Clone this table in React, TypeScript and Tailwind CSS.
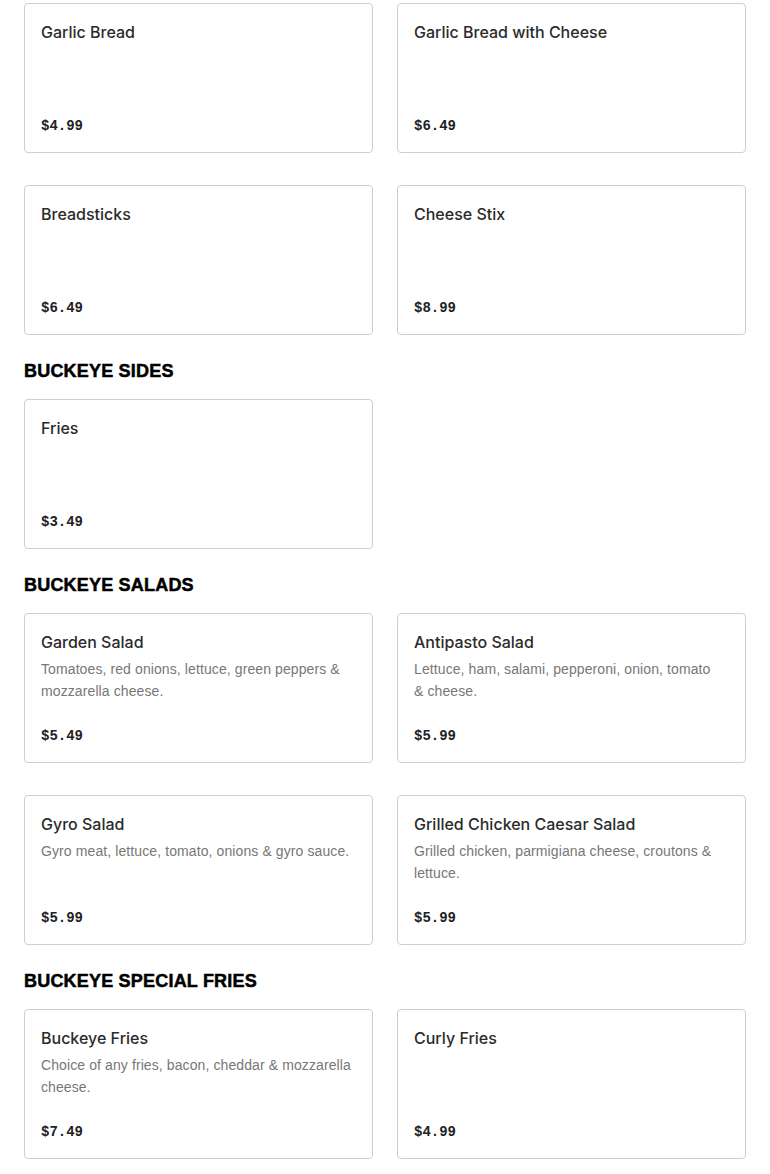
type Item = {
  name: string;
  desc?: string;
  price: string;
};

type Section = {
  title?: string;
  items: Item[];
};

const sections: Section[] = [
  {
    items: [
      { name: "Garlic Bread", price: "$4.99" },
      { name: "Garlic Bread with Cheese", price: "$6.49" },
      { name: "Breadsticks", price: "$6.49" },
      { name: "Cheese Stix", price: "$8.99" },
    ],
  },
  {
    title: "BUCKEYE SIDES",
    items: [{ name: "Fries", price: "$3.49" }],
  },
  {
    title: "BUCKEYE SALADS",
    items: [
      {
        name: "Garden Salad",
        desc: "Tomatoes, red onions, lettuce, green peppers & mozzarella cheese.",
        price: "$5.49",
      },
      {
        name: "Antipasto Salad",
        // keep "& cheese." together so it wraps like the live menu
        desc: "Lettuce, ham, salami, pepperoni, onion, tomato &\u00a0cheese.",
        price: "$5.99",
      },
      {
        name: "Gyro Salad",
        desc: "Gyro meat, lettuce, tomato, onions & gyro sauce.",
        price: "$5.99",
      },
      {
        name: "Grilled Chicken Caesar Salad",
        desc: "Grilled chicken, parmigiana cheese, croutons & lettuce.",
        price: "$5.99",
      },
    ],
  },
  {
    title: "BUCKEYE SPECIAL FRIES",
    items: [
      {
        name: "Buckeye Fries",
        desc: "Choice of any fries, bacon, cheddar & mozzarella cheese.",
        price: "$7.49",
      },
      { name: "Curly Fries", price: "$4.99" },
    ],
  },
];

function MenuCard({ item }: { item: Item }) {
  return (
    <div className="flex h-[150px] flex-col rounded border border-[#cfcfcf] bg-white p-4">
      <div className="text-[16px] leading-6 font-medium text-[#2b2b2b] [font-family:Inter,'Liberation_Sans',sans-serif]">
        {item.name}
      </div>
      {item.desc && (
        <p className="mt-1 text-[14px] leading-[22px] tracking-[0.1px] text-[#777] [font-family:'Liberation_Sans',Arial,sans-serif]">
          {item.desc}
        </p>
      )}
      <div className="mt-auto text-[14px] leading-5 font-bold text-[#222] [font-family:'Liberation_Mono',monospace]">
        {item.price}
      </div>
    </div>
  );
}

export default function App() {
  return (
    <div className="min-h-screen bg-white px-6 pt-[3px] pb-6">
      {sections.map((s, i) => (
        <section key={i}>
          {s.title && (
            <h2 className="mt-[24px] mb-[16px] text-[18px] leading-6 font-black tracking-[0.2px] text-black [-webkit-text-stroke:0.5px_black] [font-family:'Liberation_Sans',Arial,sans-serif]">
              {s.title}
            </h2>
          )}
          <div className="grid grid-cols-2 gap-x-6 gap-y-8">
            {s.items.map((it) => (
              <MenuCard key={it.name} item={it} />
            ))}
          </div>
        </section>
      ))}
    </div>
  );
}
